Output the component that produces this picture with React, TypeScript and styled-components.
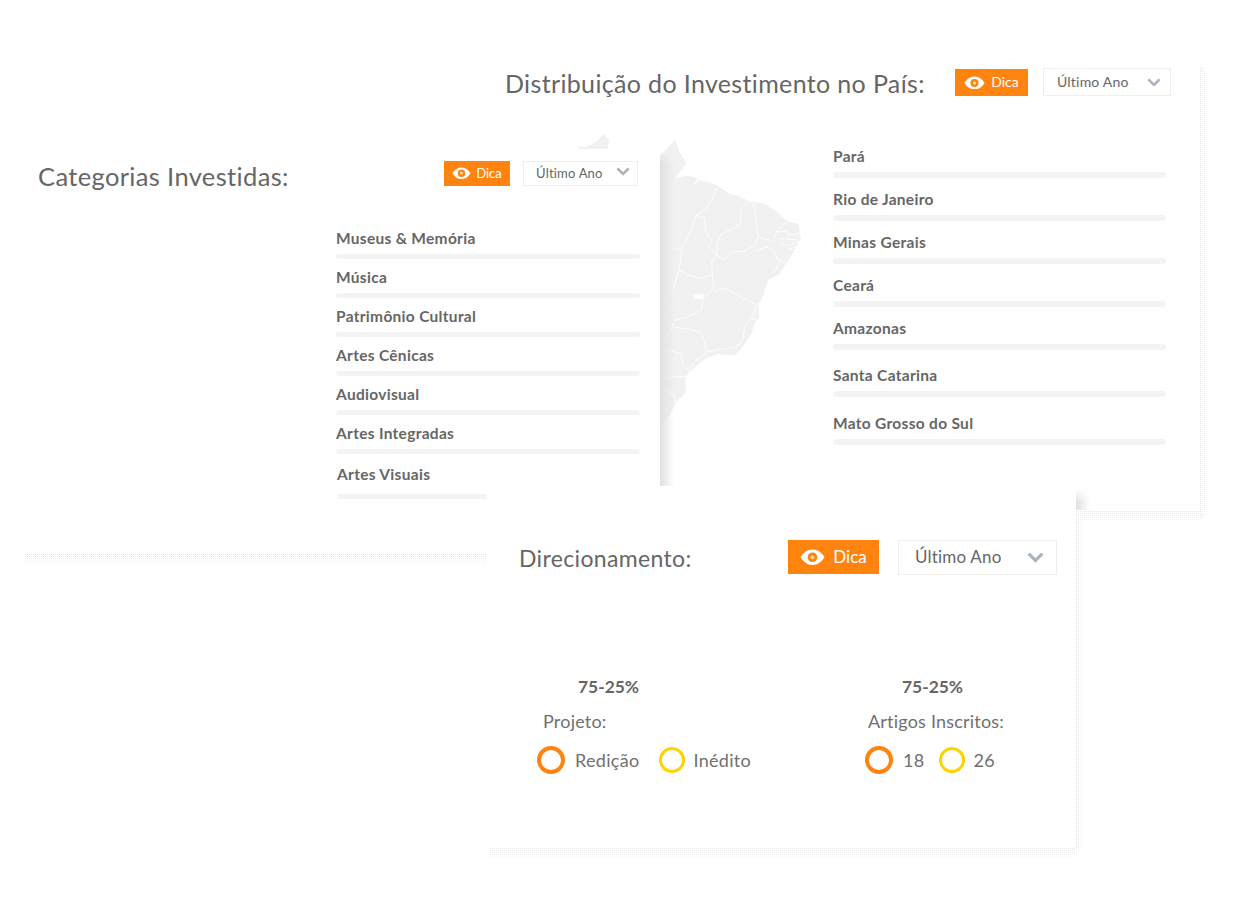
import styled, { createGlobalStyle } from 'styled-components';

const Global = createGlobalStyle`
  html, body {
    margin: 0;
    padding: 0;
    background: #fff;
  }
  body {
    font-family: Lato, "Open Sans", sans-serif;
    color: #666;
  }
`;

const Page = styled.div`
  position: relative;
  width: 1234px;
  height: 900px;
  overflow: hidden;
  background: #fff;
`;

// the three cards overlap like windows, so these are placed on the canvas
const Card = styled.section<{ $left: number; $top: number; $w: number; $h: number; $z: number }>`
  position: absolute;
  left: ${(p) => p.$left}px;
  top: ${(p) => p.$top}px;
  width: ${(p) => p.$w}px;
  height: ${(p) => p.$h}px;
  z-index: ${(p) => p.$z};
  background: #fff;
  box-sizing: border-box;
`;

const Header = styled.header<{ $pad: string }>`
  display: flex;
  align-items: flex-start;
  padding: ${(p) => p.$pad};
`;

const Title = styled.h2<{ $size: number; $drop: number }>`
  margin: ${(p) => p.$drop}px auto 0 0;
  font-size: ${(p) => p.$size}px;
  font-weight: 400;
  color: #666;
  white-space: nowrap;
  letter-spacing: 0.35px;
`;

type Size = 'sm' | 'md' | 'lg';
const dica = {
  sm: { w: 66, h: 25, font: 13, eye: 19, gap: 5, top: 0 },
  md: { w: 73, h: 27, font: 14, eye: 21, gap: 6, top: 1 },
  lg: { w: 91, h: 34, font: 17, eye: 25, gap: 8, top: 0 },
};
const select = {
  sm: { w: 115, h: 25, font: 13, left: 12, right: 7, ml: 13, chevron: 14, lift: 4 },
  md: { w: 128, h: 28, font: 14, left: 13, right: 9, ml: 15, chevron: 14, lift: 0 },
  lg: { w: 159, h: 35, font: 17, left: 16, right: 12, ml: 19, chevron: 17, lift: 0 },
};

const DicaButton = styled.div<{ $size: Size }>`
  display: flex;
  align-items: center;
  justify-content: center;
  gap: ${(p) => dica[p.$size].gap}px;
  width: ${(p) => dica[p.$size].w}px;
  height: ${(p) => dica[p.$size].h}px;
  margin-top: ${(p) => dica[p.$size].top}px;
  background: #ff830f;
  color: #fff;
  font-size: ${(p) => dica[p.$size].font}px;
  flex-shrink: 0;
  span {
    padding-bottom: 2px;
  }
`;

const SelectBox = styled.div<{ $size: Size }>`
  display: flex;
  align-items: center;
  justify-content: space-between;
  box-sizing: border-box;
  width: ${(p) => select[p.$size].w}px;
  height: ${(p) => select[p.$size].h}px;
  margin-left: ${(p) => select[p.$size].ml}px;
  padding: 0 ${(p) => select[p.$size].right}px 0 ${(p) => select[p.$size].left}px;
  border: 1px solid #eeeeee;
  background: #fff;
  color: #666;
  font-size: ${(p) => select[p.$size].font}px;
  letter-spacing: 0.2px;
  flex-shrink: 0;
  span {
    padding-bottom: 2px;
  }
  svg {
    margin-bottom: ${(p) => select[p.$size].lift}px;
  }
`;

const Body = styled.div`
  display: flex;
  align-items: flex-start;
`;

const MapArt = styled.svg`
  display: block;
  width: 260px;
  height: 300px;
  margin: 27px 0 0 70px;
  flex-shrink: 0;
`;

const List = styled.div<{ $left: number; $top: number; $w: number }>`
  width: ${(p) => p.$w}px;
  margin-left: ${(p) => p.$left}px;
  padding-top: ${(p) => p.$top}px;
`;

const Row = styled.div<{ $pitch: number; $bar: number; $barGap: number; $inset?: number }>`
  height: ${(p) => p.$pitch}px;
  padding-left: ${(p) => p.$inset ?? 0}px;
  span {
    display: block;
    height: 20px;
    line-height: 20px;
    font-size: 15.5px;
    font-weight: 700;
    color: #666;
    white-space: nowrap;
    letter-spacing: 0.3px;
  }
  i {
    display: block;
    height: ${(p) => p.$bar}px;
    margin-top: ${(p) => p.$barGap}px;
    border-radius: 3px;
    background: #f4f4f4;
  }
`;

// soft edge a card throws over whatever sits behind it
const EdgeShade = styled.div<{ $top: number; $h: number }>`
  position: absolute;
  left: 100%;
  top: ${(p) => p.$top}px;
  width: 14px;
  height: ${(p) => p.$h}px;
  background: linear-gradient(to right, #e0e0e0, rgba(255, 255, 255, 0));
  mask-image: linear-gradient(to bottom, transparent 0, #000 12px);
`;

const Dither = styled.div<{ $side: 'bottom' | 'right'; $from: number; $len: number }>`
  position: absolute;
  ${(p) =>
    p.$side === 'bottom'
      ? `left: ${p.$from}px; top: 100%; width: ${p.$len}px; height: 12px;`
      : `left: 100%; top: ${p.$from}px; width: 6px; height: ${p.$len}px;`}
  background-image: repeating-linear-gradient(90deg, #e6e6e6 0 1px, transparent 1px 2px);
  mask-image: repeating-linear-gradient(0deg, #000 0 1px, transparent 1px 2px),
    linear-gradient(
      ${(p) => (p.$side === 'bottom' ? 'to top' : 'to left')},
      rgba(0, 0, 0, 0.1),
      #000 80%
    );
  mask-composite: intersect;
`;

const Stats = styled.div`
  display: flex;
  padding: 100px 0 0 50px;
`;

const Stat = styled.div<{ $w: number }>`
  width: ${(p) => p.$w}px;
  flex-shrink: 0;
`;

const Percent = styled.div<{ $indent: number }>`
  padding-left: ${(p) => p.$indent}px;
  height: 24px;
  line-height: 24px;
  font-size: 17.4px;
  font-weight: 700;
  color: #666;
`;

const StatLabel = styled.div<{ $indent: number }>`
  padding-left: ${(p) => p.$indent}px;
  margin-top: 10px;
  height: 24px;
  line-height: 24px;
  font-size: 18px;
  color: #707070;
  letter-spacing: 0.2px;
`;

const Legend = styled.div`
  display: flex;
  align-items: center;
  margin-top: 12px;
  height: 30px;
`;

const Ring = styled.span<{ $color: string; $size: number; $weight: number }>`
  width: ${(p) => p.$size}px;
  height: ${(p) => p.$size}px;
  box-sizing: border-box;
  border: ${(p) => p.$weight}px solid ${(p) => p.$color};
  border-radius: 50%;
  flex-shrink: 0;
`;

const LegendText = styled.span<{ $left: number; $right?: number }>`
  margin: 0 ${(p) => p.$right ?? 0}px 0 ${(p) => p.$left}px;
  font-size: 18px;
  color: #707070;
  letter-spacing: 0.3px;
`;

function Eye({ size }: { size: number }) {
  return (
    <svg width={size} height={size * 0.66} viewBox='0 0 26 17' aria-hidden='true'>
      <path d='M0.5 8.5C4 3 8.2 0.5 13 0.5S22 3 25.5 8.5C22 14 17.8 16.5 13 16.5S4 14 0.5 8.5Z' fill='#fff' />
      <circle cx='13' cy='8.5' r='5' fill='#ff830f' />
      <circle cx='13' cy='8.5' r='2' fill='#ffd9b0' />
    </svg>
  );
}

function Chevron({ size }: { size: number }) {
  return (
    <svg width={size} height={size * 0.62} viewBox='0 0 16 10' aria-hidden='true'>
      <path d='M1.5 1.5L8 8L14.5 1.5' fill='none' stroke='#a9b3bd' strokeWidth='3' />
    </svg>
  );
}

function Controls({ size }: { size: Size }) {
  return (
    <>
      <DicaButton $size={size}>
        <Eye size={dica[size].eye} />
        <span>Dica</span>
      </DicaButton>
      <SelectBox $size={size}>
        <span>Último Ano</span>
        <Chevron size={select[size].chevron} />
      </SelectBox>
    </>
  );
}

function BrazilMap() {
  return (
    <MapArt viewBox='0 0 780 900' aria-hidden='true'>
      <path d='M35 50L50 65L80 65L110 50L130 26L148 45L143 72L60 72Z' fill='#f1f1f1' />
      <path
        d='M200 100L300 92L345 45L360 85L380 115L345 160L385 152L415 160L395 185L420 165L470 180L505 205L540 215L570 230L610 235L650 260L680 288L715 297L723 340L690 400L655 450L625 465L610 510L595 540L598 580L585 590L575 625L545 670L525 690L470 688L430 705L385 745L375 765L378 800L350 830L330 870L300 897L200 897Z'
        fill='#f1f1f1'
      />
      <g fill='none' stroke='#fff' strokeWidth='2.5' strokeLinejoin='round'>
        <path d='M470 185L455 225L440 250L410 270L433 280L440 330L458 345L445 362L470 390L455 410L460 490' />
        <path d='M410 270L390 320L365 375L357 435L385 450L420 460L455 450' />
        <path d='M300 365L365 375' strokeWidth='1.5' />
        <path d='M570 230L545 250L540 300L520 310L480 330L470 360L470 390L490 405L520 380L550 380L585 360L595 335L580 235' />
        <path d='M595 335L640 350L660 340L720 345' />
        <path d='M680 288L650 320L640 345M650 320L680 320L685 330L720 325M660 352L680 362L720 350M680 375L720 360' />
        <path d='M585 380L620 365L645 380L650 400L680 415M645 395L660 410L645 440' />
        <path d='M460 490L430 520L425 555L385 575L345 585L335 610L300 665' />
        <path d='M357 435L340 490L300 530M300 575L340 600' />
        <path d='M460 500L495 488L530 510L590 540L575 580L555 600L550 640L530 665L470 675L440 680L430 640L420 620L385 612L345 607' />
        <path d='M575 580L590 585M530 665L545 655' />
        <path d='M440 680L400 715L385 742M300 670L360 685L370 720L388 740' />
        <path d='M300 765L345 755L378 755M300 780L340 810L350 830' />
      </g>
      <rect x='403' y='508' width='27' height='14' fill='#fff' />
    </MapArt>
  );
}

const states = ['Pará', 'Rio de Janeiro', 'Minas Gerais', 'Ceará', 'Amazonas', 'Santa Catarina', 'Mato Grosso do Sul'];
const categories = ['Museus & Memória', 'Música', 'Patrimônio Cultural', 'Artes Cênicas', 'Audiovisual', 'Artes Integradas'];

export default function App() {
  return (
    <Page>
      <Global />

      <Card $left={490} $top={60} $w={710} $h={450} $z={1}>
        <Header $pad='8px 29px 0 15px'>
          <Title $size={25} $drop={0}>Distribuição do Investimento no País:</Title>
          <Controls size='md' />
        </Header>
        <Body>
          <BrazilMap />
          <List $left={13} $top={48} $w={333}>
            {states.map((s, i) => (
              <Row key={s} $pitch={i === 4 ? 47 : i === 5 ? 48 : 43} $bar={6} $barGap={6}>
                <span>{s}</span>
                <i />
              </Row>
            ))}
          </List>
        </Body>
        <Dither $side='right' $from={6} $len={452} />
        <Dither $side='bottom' $from={586} $len={124} />
      </Card>

      <Card $left={25} $top={150} $w={635} $h={403} $z={2}>
        <Header $pad='11px 22px 0 13px'>
          <Title $size={25.5} $drop={0}>Categorias Investidas:</Title>
          <Controls size='sm' />
        </Header>
        <List $left={311} $top={37} $w={304}>
          {categories.map((c, i) => (
            <Row key={c} $pitch={i === 5 ? 41 : 39} $bar={5} $barGap={6}>
              <span>{c}</span>
              <i />
            </Row>
          ))}
          <Row $pitch={39} $bar={5} $barGap={10} $inset={1}>
            <span>Artes Visuais</span>
            <i />
          </Row>
        </List>
        <EdgeShade $top={2} $h={340} />
        <Dither $side='bottom' $from={0} $len={462} />
      </Card>

      <Card $left={487} $top={486} $w={589} $h={361} $z={3}>
        <Header $pad='54px 19px 0 32px'>
          <Title $size={23} $drop={4}>Direcionamento:</Title>
          <Controls size='lg' />
        </Header>
        <Stats>
          <Stat $w={328}>
            <Percent $indent={41}>75-25%</Percent>
            <StatLabel $indent={6}>Projeto:</StatLabel>
            <Legend>
              <Ring $color='#ff830f' $size={28} $weight={4} />
              <LegendText $left={10} $right={20}>Redição</LegendText>
              <Ring $color='#ffd200' $size={26} $weight={3} />
              <LegendText $left={8}>Inédito</LegendText>
            </Legend>
          </Stat>
          <Stat $w={200}>
            <Percent $indent={37}>75-25%</Percent>
            <StatLabel $indent={3}>Artigos Inscritos:</StatLabel>
            <Legend>
              <Ring $color='#ff830f' $size={28} $weight={4} />
              <LegendText $left={10} $right={15}>18</LegendText>
              <Ring $color='#ffd200' $size={26} $weight={3} />
              <LegendText $left={8}>26</LegendText>
            </Legend>
          </Stat>
        </Stats>
        <EdgeShade $top={4} $h={20} />
        <Dither $side='right' $from={14} $len={350} />
        <Dither $side='bottom' $from={3} $len={586} />
      </Card>
    </Page>
  );
}
